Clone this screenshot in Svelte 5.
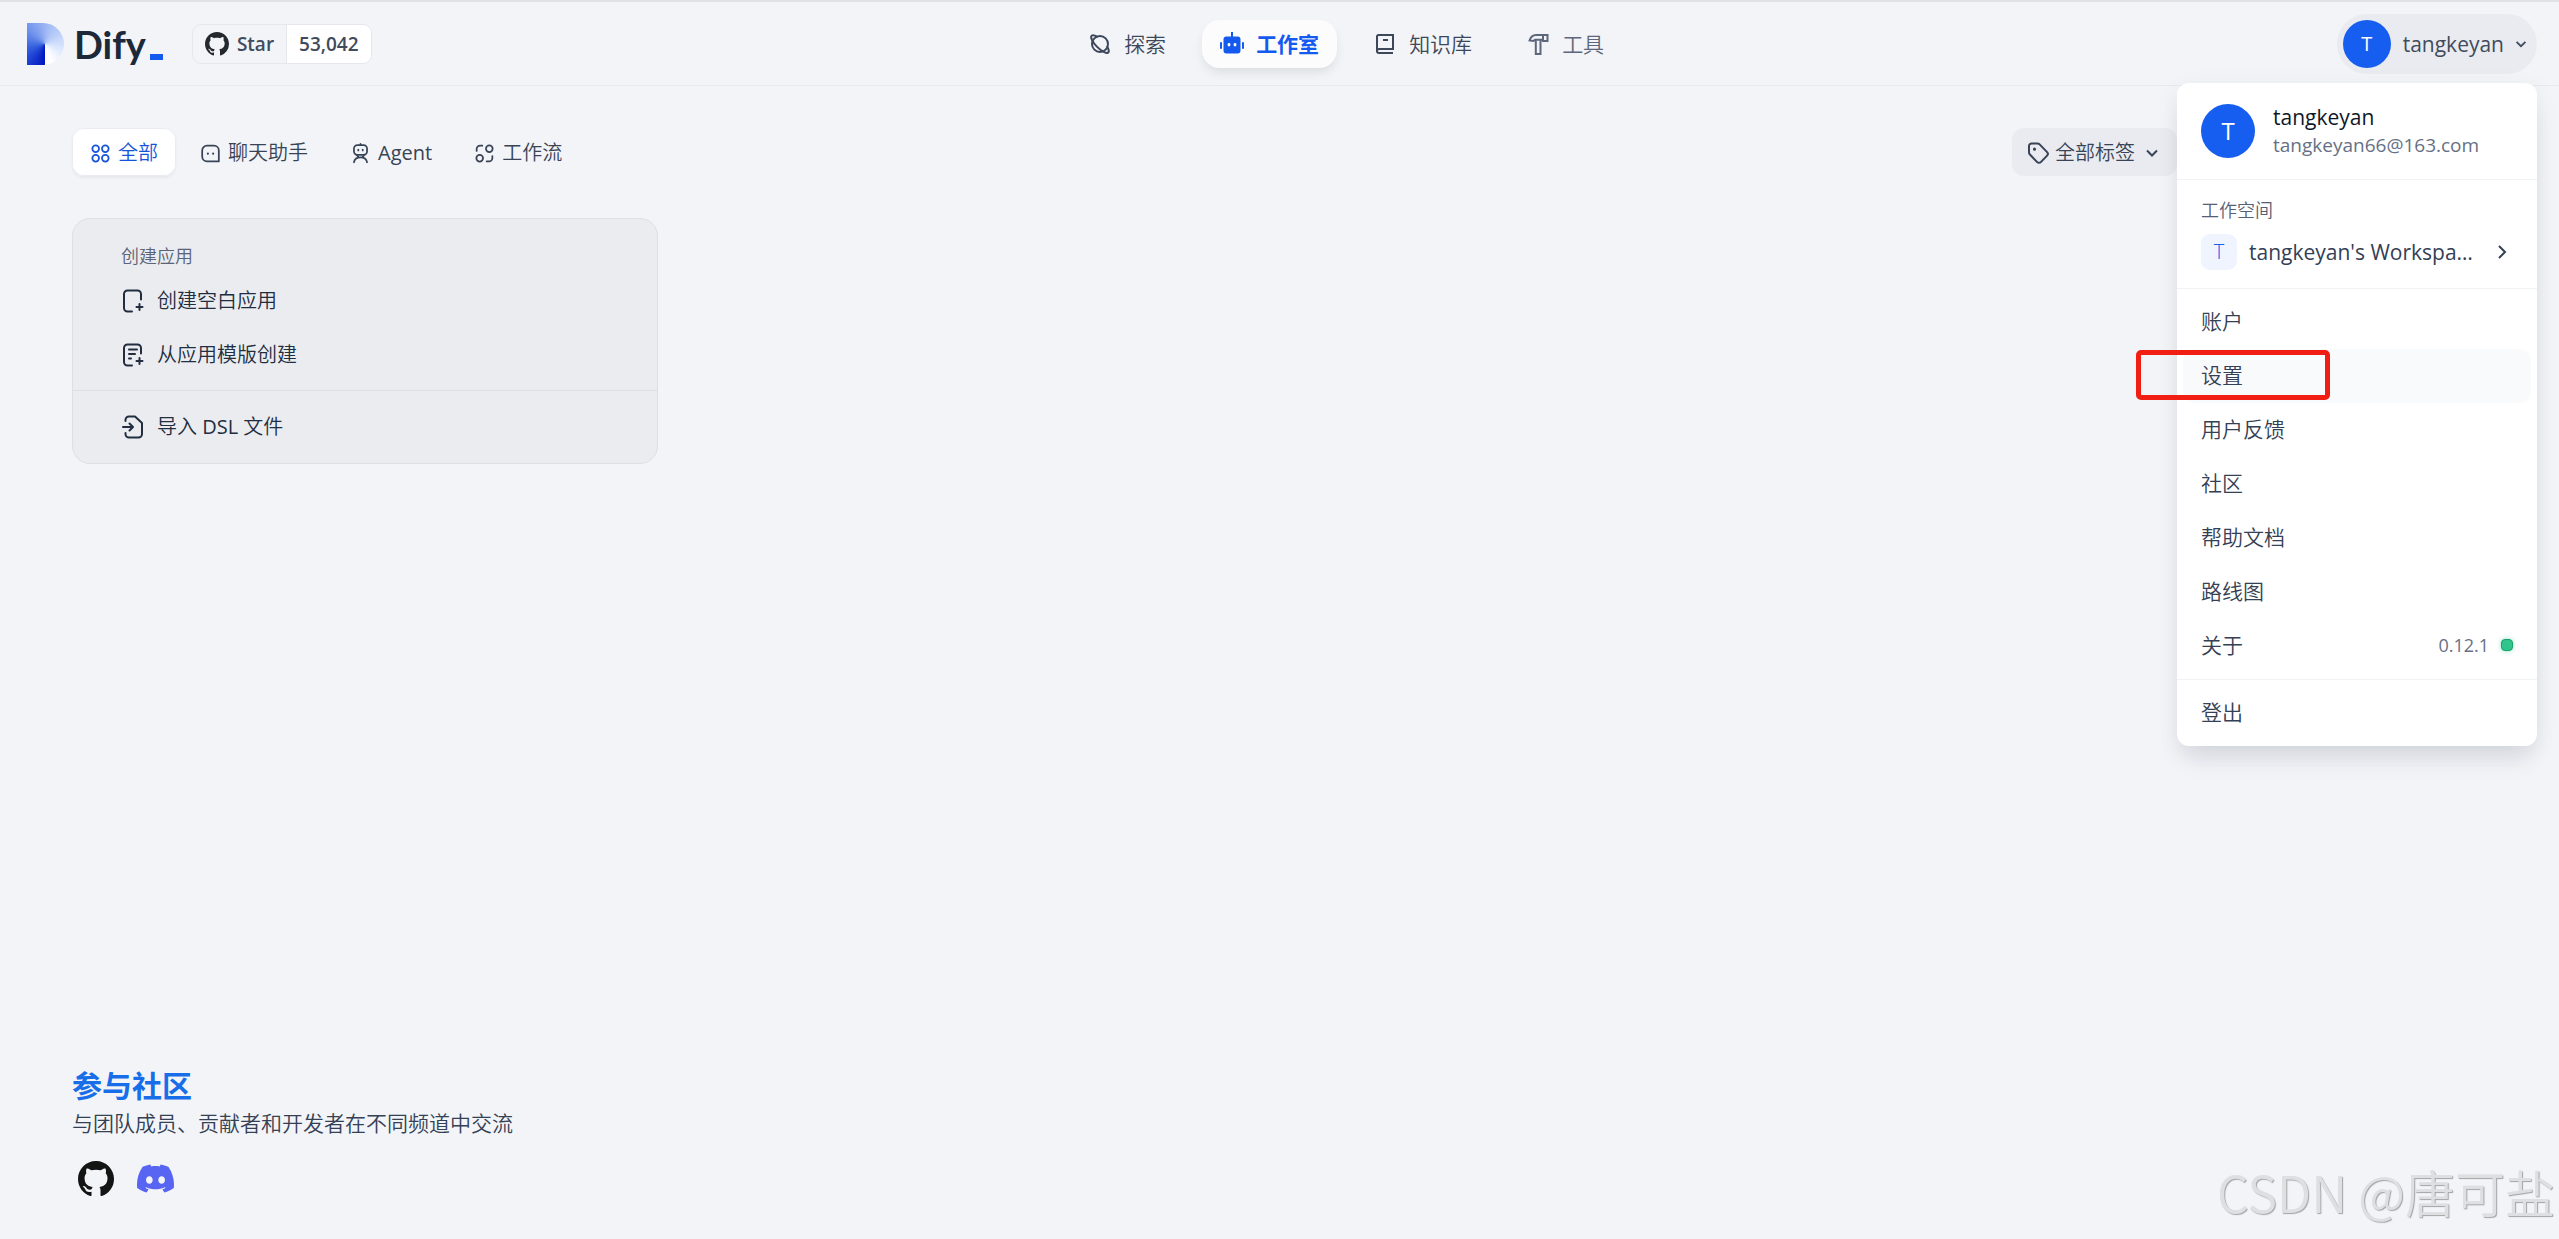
<script lang="ts">
  interface MenuItem {
    label: string;
    marked?: boolean;
    version?: string;
  }

  const navItems = [
    { icon: "explore", label: "探索" },
    { icon: "robot", label: "工作室" },
    { icon: "book", label: "知识库" },
    { icon: "hammer", label: "工具" },
  ];

  const tabs = [
    { icon: "dots", label: "全部" },
    { icon: "chat", label: "聊天助手" },
    { icon: "agent", label: "Agent" },
    { icon: "flow", label: "工作流" },
  ];

  const menuItems: MenuItem[] = [
    { label: "账户" },
    { label: "设置", marked: true },
    { label: "用户反馈" },
    { label: "社区" },
    { label: "帮助文档" },
    { label: "路线图" },
    { label: "关于", version: "0.12.1" },
  ];

  const user = { name: "tangkeyan", email: "tangkeyan66@163.com" };

  let activeNav = $state("robot");
  let activeTab = $state("dots");
  let menuOpen = $state(true);
</script>

{#snippet github()}
  <svg class="github" viewBox="0 0 16 16" fill="currentColor" aria-hidden="true">
    <path d="M8 0C3.58 0 0 3.58 0 8c0 3.54 2.29 6.53 5.47 7.59.4.07.55-.17.55-.38 0-.19-.01-.82-.01-1.49-2.01.37-2.53-.49-2.69-.94-.09-.23-.48-.94-.82-1.13-.28-.15-.68-.52-.01-.53.63-.01 1.08.58 1.23.82.72 1.21 1.87.87 2.33.66.07-.52.28-.87.51-1.07-1.78-.2-3.64-.89-3.64-3.95 0-.87.31-1.59.82-2.15-.08-.2-.36-1.02.08-2.12 0 0 .67-.21 2.2.82.64-.18 1.32-.27 2-.27s1.36.09 2 .27c1.53-1.04 2.2-.82 2.2-.82.44 1.1.16 1.92.08 2.12.51.56.82 1.27.82 2.15 0 3.07-1.87 3.75-3.65 3.95.29.25.54.73.54 1.48 0 1.07-.01 1.93-.01 2.2 0 .21.15.46.55.38A8.01 8.01 0 0 0 16 8c0-4.42-3.58-8-8-8z" />
  </svg>
{/snippet}

{#snippet chevron(size: number)}
  <svg width={size} height={size} viewBox="0 0 18 18" fill="none" stroke="currentColor" stroke-width="2" aria-hidden="true">
    <path d="M4 6.5l5 5 5-5" />
  </svg>
{/snippet}

{#snippet icon(name: string)}
  <svg class="icon" viewBox="0 0 24 24" fill="none" stroke="currentColor" stroke-width="2" stroke-linecap="round" stroke-linejoin="round" aria-hidden="true">
    {#if name === "explore"}
      <circle cx="12" cy="12" r="8" />
      <path d="M7.300 -3.100A11.800 4 0 1 1 -7.300 -3.100" transform="translate(12 12) rotate(45)" />
    {:else if name === "robot"}
      <g stroke="none" fill="currentColor">
        <rect x="3.500" y="4.500" width="17" height="17" rx="3" />
        <rect x="11" y="0" width="2" height="6" />
        <rect x="0" y="10" width="2" height="7" rx="1" />
        <rect x="22" y="10" width="2" height="7" rx="1" />
      </g>
      <path d="M9 12.500v.5M15 12.500v.5" stroke="#fff" stroke-width="2.800" />
    {:else if name === "book"}
      <path d="M20 21H6a2 2 0 0 1-2-2V4.500A1.500 1.500 0 0 1 5.500 3H20v14H6M10 8h5" stroke-linecap="butt" stroke-linejoin="miter" />
      <path d="M4 19a2 2 0 0 1 2-2" />
    {:else if name === "hammer"}
      <path d="M9.800 9.500V22h4.700V9.500M3.500 8.500C4.500 5.500 6.500 3 10 3h11.500v6H17l-1-1.200H9L7.500 9z" stroke-linejoin="miter" />
      <path d="M17 3v6" />
    {:else if name === "dots"}
      <circle cx="6.500" cy="6.500" r="3.800" />
      <circle cx="17.500" cy="6.500" r="3.800" />
      <circle cx="6.500" cy="17.500" r="3.800" />
      <circle cx="17.500" cy="17.500" r="3.800" />
    {:else if name === "chat"}
      <path d="M8 3h8a5.500 5.500 0 0 1 5.500 5.500V21H8a5.500 5.500 0 0 1-5.500-5.500v-7A5.500 5.500 0 0 1 8 3z" />
      <path d="M9 12v.2M15 12v.2" stroke-width="2.400" />
    {:else if name === "agent"}
      <rect x="4.500" y="2.500" width="15" height="11" rx="4" />
      <path d="M12 1v1M9.500 7.500v1M14.500 7.500v1M4.500 22c.8-3.500 3.500-5.500 7.500-5.500s6.700 2 7.500 5.500M8 14l1.500 2M16 14l-1.500 2" />
    {:else if name === "flow"}
      <circle cx="17.500" cy="6.500" r="3.800" />
      <circle cx="6.500" cy="17.500" r="3.800" />
      <path d="M3 9V7a4 4 0 0 1 4-4h2.500M21 15v2a4 4 0 0 1-4 4h-2.500" />
    {:else if name === "blank"}
      <path d="M20 10.500V5a3.500 3.500 0 0 0-3.500-3.500h-10A3.500 3.500 0 0 0 3 5v14a3.500 3.500 0 0 0 3.500 3.500h4.500M18.500 15v6M15.500 18h6" />
    {:else if name === "template"}
      <path d="M20 10.500V5a3.500 3.500 0 0 0-3.500-3.500h-10A3.500 3.500 0 0 0 3 5v14a3.500 3.500 0 0 0 3.500 3.500h4.500M18.500 15v6M15.500 18h6M8 6.500h8M8 11h6M8 15.500h2" />
    {:else if name === "import"}
      <path d="M4.500 6V5A3.500 3.500 0 0 1 8 1.500h6L21 8v11a3.500 3.500 0 0 1-3.500 3.500H8A3.500 3.500 0 0 1 4.500 19v-1M2 12h9.500M8.500 8.500L12 12l-3.500 3.500" />
    {:else if name === "tag"}
      <path d="M3 5a2.500 2.500 0 0 1 2.500-2.500h6a3 3 0 0 1 2.100.9l7.500 7.700a2.500 2.500 0 0 1 0 3.500l-6.300 6.500a2.500 2.500 0 0 1-3.600 0L3.900 13.500A3 3 0 0 1 3 11.400z" />
      <path d="M8.500 8v.2" stroke-width="3" />
    {/if}
  </svg>
{/snippet}

<div class="page">
  <header class="header">
    <div class="brand">
      <a class="logo" href="/apps">
        <span class="logo-mark"></span>
        <span class="logo-name">Dify</span>
        <span class="logo-cursor"></span>
      </a>
      <a class="star" href="/star">
        <span class="star-label">{@render github()}Star</span>
        <span class="star-count">53,042</span>
      </a>
    </div>

    <nav class="nav">
      {#each navItems as item}
        <button
          type="button"
          class="nav-item"
          class:active={activeNav === item.icon}
          class:muted={item.icon === "hammer"}
          onclick={() => (activeNav = item.icon)}
        >
          {@render icon(item.icon)}
          {item.label}
        </button>
      {/each}
    </nav>

    <div class="account">
      <button type="button" class="account-button" aria-expanded={menuOpen} onclick={() => (menuOpen = !menuOpen)}>
        <span class="avatar">T</span>
        <span>{user.name}</span>
        {@render chevron(16)}
      </button>

      {#if menuOpen}
        <div class="menu">
          <div class="profile">
            <span class="avatar avatar-large">T</span>
            <div class="profile-text">
              <div class="profile-name">{user.name}</div>
              <div class="profile-email">{user.email}</div>
            </div>
          </div>
          <div class="workspace">
            <div class="workspace-title">工作空间</div>
            <button type="button" class="workspace-button">
              <span class="workspace-badge">T</span>
              <span class="workspace-name">tangkeyan's Workspace</span>
              <svg width="18" height="18" viewBox="0 0 18 18" fill="none" stroke="currentColor" stroke-width="2" aria-hidden="true">
                <path d="M6 3l6 6-6 6" />
              </svg>
            </button>
          </div>
          <div class="menu-group">
            {#each menuItems as item}
              <button type="button" class="menu-item" class:hovered={item.marked}>
                <span>{item.label}</span>
                {#if item.version}
                  <span class="version">{item.version}<i class="status"></i></span>
                {/if}
                {#if item.marked}
                  <span class="marker"></span>
                {/if}
              </button>
            {/each}
          </div>
          <div class="menu-group">
            <button type="button" class="menu-item">登出</button>
          </div>
        </div>
      {/if}
    </div>
  </header>

  <main class="content">
    <div class="toolbar">
      <div class="tabs">
        {#each tabs as tab}
          <button
            type="button"
            class="tab"
            class:active={activeTab === tab.icon}
            onclick={() => (activeTab = tab.icon)}
          >
            {@render icon(tab.icon)}
            {tab.label}
          </button>
        {/each}
      </div>
      <button type="button" class="tag-filter">
        {@render icon("tag")}
        <span>全部标签</span>
        {@render chevron(18)}
      </button>
    </div>

    <div class="apps">
      <section class="create-card">
        <div class="create-group">
          <h2 class="create-title">创建应用</h2>
          <button type="button" class="create-item">{@render icon("blank")}创建空白应用</button>
          <button type="button" class="create-item">{@render icon("template")}从应用模版创建</button>
        </div>
        <div class="create-group create-import">
          <button type="button" class="create-item">
            {@render icon("import")}
            <span>导入 <span class="latin">DSL</span> 文件</span>
          </button>
        </div>
      </section>
    </div>
  </main>

  <footer class="footer">
    <h3 class="footer-title">参与社区</h3>
    <p class="footer-text">与团队成员、贡献者和开发者在不同频道中交流</p>
    <div class="footer-links">
      <a class="footer-github" href="/github" aria-label="GitHub">{@render github()}</a>
      <a class="footer-discord" href="/discord" aria-label="Discord">
        <svg viewBox="0 0 24 24" width="37" height="37" fill="currentColor" aria-hidden="true">
          <path d="M20.317 4.3698a19.7913 19.7913 0 00-4.8851-1.5152.0741.0741 0 00-.0785.0371c-.211.3753-.4447.8648-.6083 1.2495-1.8447-.2762-3.68-.2762-5.4868 0-.1636-.3933-.4058-.8742-.6177-1.2495a.077.077 0 00-.0785-.037 19.7363 19.7363 0 00-4.8852 1.515.0699.0699 0 00-.0321.0277C.5334 9.0458-.319 13.5799.0992 18.0578a.0824.0824 0 00.0312.0561c2.0528 1.5076 4.0413 2.4228 5.9929 3.0294a.0777.0777 0 00.0842-.0276c.4616-.6304.8731-1.2952 1.226-1.9942a.076.076 0 00-.0416-.1057c-.6528-.2476-1.2743-.5495-1.8722-.8923a.077.077 0 01-.0076-.1277c.1258-.0943.2517-.1923.3718-.2914a.0743.0743 0 01.0776-.0105c3.9278 1.7933 8.18 1.7933 12.0614 0a.0739.0739 0 01.0785.0095c.1202.099.246.1981.3728.2924a.077.077 0 01-.0066.1276 12.2986 12.2986 0 01-1.873.8914.0766.0766 0 00-.0407.1067c.3604.698.7719 1.3628 1.225 1.9932a.076.076 0 00.0842.0286c1.961-.6067 3.9495-1.5219 6.0023-3.0294a.077.077 0 00.0313-.0552c.5004-5.177-.8382-9.6739-3.5485-13.6604a.061.061 0 00-.0312-.0286zM8.02 15.3312c-1.1825 0-2.1569-1.0857-2.1569-2.419 0-1.3332.9555-2.4189 2.157-2.4189 1.2108 0 2.1757 1.0952 2.1568 2.419 0 1.3332-.9555 2.4189-2.1569 2.4189zm7.9748 0c-1.1825 0-2.1569-1.0857-2.1569-2.419 0-1.3332.9554-2.4189 2.1569-2.4189 1.2108 0 2.1757 1.0952 2.1568 2.419 0 1.3332-.946 2.4189-2.1568 2.4189Z" />
        </svg>
      </a>
    </div>
  </footer>

  <div class="watermark">CSDN @唐可盐</div>
</div>

<style>
  :global(body) {
    margin: 0;
    background: #f2f4f8;
  }

  .page {
    display: flex;
    flex-direction: column;
    min-height: 100vh;
    box-sizing: border-box;
    border-top: 2px solid #dfe1e2;
    background: #f2f4f8;
    color: #354052;
    font-family: "Open Sans", "Noto Sans CJK SC", sans-serif;
    font-size: 21px;
    line-height: 30px;
  }

  button {
    margin: 0;
    padding: 0;
    border: 0;
    background: none;
    color: inherit;
    font: inherit;
    cursor: pointer;
  }
  a {
    color: inherit;
    text-decoration: none;
  }
  svg {
    display: block;
    flex: none;
  }
  .icon {
    width: 24px;
    height: 24px;
  }

  .header {
    display: flex;
    align-items: center;
    justify-content: space-between;
    height: 83px;
    padding: 0 22px 0 27px;
    border-bottom: 1px solid #e7e9ed;
  }
  .brand,
  .logo,
  .star,
  .star-label {
    display: flex;
    align-items: center;
  }
  .brand { gap: 29px; }
  .logo-mark {
    width: 37px;
    height: 42px;
    margin-right: 10px;
    border-radius: 0 21px 21px 0;
    background: conic-gradient(from 180deg at 18px 21px, #0014c0, #2f5bdc 70deg, #6f92ec 130deg, #a3bbf5 190deg, #d2e0fd 270deg, #ffffff 340deg);
  }
  .logo-name {
    color: #1d2939;
    font-family: Lato, sans-serif;
    font-size: 38px;
    font-weight: 700;
    line-height: 42px;
  }
  .logo-cursor {
    width: 13px;
    height: 6px;
    margin: 27px 0 0 4px;
    background: #155aef;
  }
  .star {
    height: 38px;
    border: 1px solid #e4e7ec;
    border-radius: 9px;
    overflow: hidden;
    color: #414b5c;
    font-size: 19px;
    font-weight: 600;
  }
  .star-label {
    gap: 8px;
    padding: 0 12px;
  }
  .star-label .github {
    width: 24px;
    height: 24px;
    color: #24292f;
  }
  .star-count {
    padding: 0 12px;
    border-left: 1px solid #e4e7ec;
    background: #fff;
    line-height: 38px;
  }

  .nav {
    display: flex;
    gap: 18px;
  }
  .nav-item {
    display: flex;
    align-items: center;
    gap: 12px;
    height: 48px;
    padding: 0 18px;
    border-radius: 18px;
    color: #3c475a;
    font-weight: 350;
  }
  .nav-item.muted { color: #5d667b; }
  .nav-item.active {
    background: #fcfcfd;
    box-shadow: 0 6px 12px -2px rgba(9, 9, 11, 0.1);
    color: #155aef;
    font-weight: 700;
  }

  .account {
    position: relative;
    margin-left: 16px;
  }
  .account-button {
    display: flex;
    align-items: center;
    height: 60px;
    padding: 0 8px 0 6px;
    border-radius: 30px;
    background: #e9ebf0;
    color: #414b5c;
  }
  .account-button svg { margin-left: 9px; }
  .account-button .avatar { margin-right: 12px; }
  .avatar {
    display: flex;
    flex: none;
    align-items: center;
    justify-content: center;
    width: 48px;
    height: 48px;
    border-radius: 50%;
    background: #155eef;
    color: #fff;
    font-size: 20px;
  }
  .avatar-large {
    width: 54px;
    height: 54px;
    font-size: 24px;
  }

  .menu {
    position: absolute;
    top: 69px;
    right: 0;
    z-index: 10;
    width: 360px;
    border-radius: 12px;
    background: #fff;
    box-shadow: 0 18px 24px -6px rgba(16, 24, 40, 0.1), 0 4px 24px rgba(16, 24, 40, 0.05);
    color: #344054;
  }
  .profile {
    display: flex;
    align-items: center;
    gap: 18px;
    height: 96px;
    padding: 0 24px;
  }
  .profile-name {
    color: #101828;
    line-height: 30px;
  }
  .profile-email {
    color: #667085;
    font-size: 19px;
    line-height: 27px;
  }
  .workspace {
    padding: 15px 24px 9px;
    border-top: 1px solid #f0f2f5;
  }
  .workspace-title {
    color: #566075;
    font-size: 18px;
    font-weight: 350;
    line-height: 30px;
  }
  .workspace-button {
    display: flex;
    align-items: center;
    gap: 12px;
    width: 100%;
    height: 54px;
    text-align: left;
  }
  .workspace-button svg { margin: 0 2px 0 4px; }
  .workspace-badge {
    display: flex;
    flex: none;
    align-items: center;
    justify-content: center;
    width: 36px;
    height: 36px;
    border-radius: 9px;
    background: #eff4ff;
    color: #155eef;
    font-size: 20px;
    font-weight: 350;
  }
  .workspace-name {
    flex: 1;
    overflow: hidden;
    text-overflow: ellipsis;
    white-space: nowrap;
  }
  .menu-group {
    padding: 6px;
    border-top: 1px solid #f0f2f5;
  }
  .menu-item {
    position: relative;
    display: flex;
    align-items: center;
    justify-content: space-between;
    box-sizing: border-box;
    width: 100%;
    height: 54px;
    padding: 0 18px 2px;
    border-radius: 12px;
    font-weight: 350;
  }
  .menu-item.hovered { background: #f9fafb; }
  .version {
    display: flex;
    align-items: center;
    gap: 12px;
    color: #667085;
    font-size: 18px;
    font-weight: 400;
  }
  .status {
    box-sizing: border-box;
    width: 12px;
    height: 12px;
    border: 1px solid #17a36b;
    border-radius: 4px;
    background: #31c48d;
    box-shadow: 0 0 4px rgba(49, 196, 141, 0.5);
  }
  .marker {
    position: absolute;
    top: 1px;
    left: -47px;
    box-sizing: border-box;
    width: 194px;
    height: 50px;
    border: 5px solid #f11e13;
    border-radius: 5px;
  }

  .content {
    flex: 1;
    padding: 42px 72px;
  }
  .toolbar {
    display: flex;
    align-items: center;
    justify-content: space-between;
    margin-bottom: 42px;
  }
  .tabs {
    display: flex;
    gap: 6px;
  }
  .tab {
    display: flex;
    align-items: center;
    gap: 7px;
    box-sizing: border-box;
    height: 48px;
    padding: 2px 18px 0;
    border-radius: 12px;
    color: #384355;
    font-size: 20px;
    font-weight: 350;
  }
  .tab:nth-child(3) { font-weight: 400; }
  .tab .icon {
    width: 21px;
    height: 21px;
  }
  .tab.active {
    background: #fff;
    box-shadow: 0 0 0 1px #e9ecf1 inset, 0 2px 3px rgba(16, 24, 40, 0.05);
    color: #1554d8;
  }
  .tag-filter {
    display: flex;
    align-items: center;
    box-sizing: border-box;
    height: 48px;
    margin-right: 310px;
    padding: 2px 16px 0 14px;
    border-radius: 12px;
    background: #e9ebf0;
    color: #384355;
    font-size: 20px;
    font-weight: 350;
  }
  .tag-filter .icon { margin-right: 5px; }
  .tag-filter span { margin-right: 8px; }

  .apps {
    display: grid;
    grid-template-columns: repeat(4, 1fr);
    gap: 24px;
  }
  .create-card {
    border: 1px solid #dcdfe4;
    border-radius: 18px;
    background: #eaecf0;
  }
  .create-group { padding: 24px 12px 8px; }
  .create-import {
    padding: 9px 12px;
    border-top: 1px solid #dcdfe4;
  }
  .create-title {
    margin: 0 0 4px;
    padding: 0 36px;
    color: #5a6377;
    font-size: 18px;
    font-weight: 350;
    line-height: 27px;
  }
  .create-item {
    display: flex;
    align-items: center;
    gap: 12px;
    width: 100%;
    height: 54px;
    padding: 0 36px;
    color: #222d40;
    font-size: 20px;
    font-weight: 350;
  }
  .latin { font-weight: 400; }

  .footer { padding: 0 72px 42px; }
  .footer-title {
    margin: 0;
    color: #186ee8;
    font-size: 30px;
    font-weight: 700;
    line-height: 42px;
  }
  .footer-text {
    margin: 1px 0 0;
    color: #344054;
    font-weight: 350;
  }
  .footer-links {
    display: flex;
    align-items: center;
    gap: 23px;
    padding: 22px 6px 0;
  }
  .footer-github { color: #141414; }
  .footer-github .github {
    width: 36px;
    height: 36px;
  }
  .footer-discord { color: #5865f2; }

  .watermark {
    position: absolute;
    right: 4px;
    bottom: 12px;
    color: #dedfe1;
    font-family: "Noto Sans CJK SC", sans-serif;
    font-size: 50px;
    font-weight: 350;
    line-height: 72px;
    text-shadow: 1px 1px 1px #a3a4a6;
    pointer-events: none;
  }
</style>
